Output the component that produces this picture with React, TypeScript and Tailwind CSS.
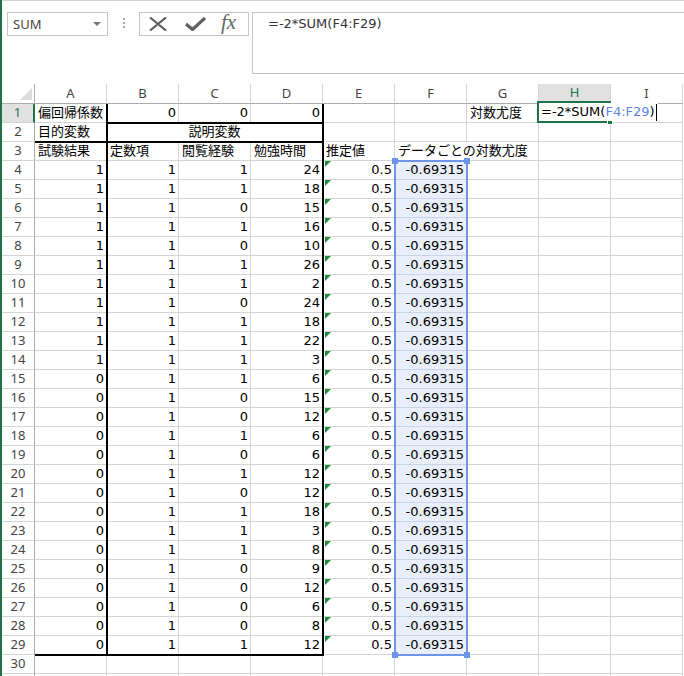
import React from "react";

const COLS = ["A", "B", "C", "D", "E", "F", "G", "H", "I"];
const colA = [1, 1, 1, 1, 1, 1, 1, 1, 1, 1, 1, 0, 0, 0, 0, 0, 0, 0, 0, 0, 0, 0, 0, 0, 0, 0];
const colC = [1, 1, 0, 1, 0, 1, 1, 0, 1, 1, 1, 1, 0, 0, 1, 0, 1, 0, 1, 1, 1, 0, 0, 0, 0, 1];
const colD = [24, 18, 15, 16, 10, 26, 2, 24, 18, 22, 3, 6, 15, 12, 6, 6, 12, 12, 18, 3, 8, 9, 12, 6, 8, 12];

type Cell = { t?: string; align?: "l" | "r" | "c"; span?: number; skip?: boolean };

function buildRow(r: number): Cell[] {
  const cells: Cell[] = COLS.map(() => ({}));
  if (r === 1) {
    cells[0] = { t: "偏回帰係数", align: "l" };
    cells[1] = { t: "0", align: "r" };
    cells[2] = { t: "0", align: "r" };
    cells[3] = { t: "0", align: "r" };
    cells[6] = { t: "対数尤度", align: "l" };
  } else if (r === 2) {
    cells[0] = { t: "目的変数", align: "l" };
    cells[1] = { t: "説明変数", align: "c", span: 3 };
    cells[2] = { skip: true };
    cells[3] = { skip: true };
  } else if (r === 3) {
    cells[0] = { t: "試験結果", align: "l" };
    cells[1] = { t: "定数項", align: "l" };
    cells[2] = { t: "閲覧経験", align: "l" };
    cells[3] = { t: "勉強時間", align: "l" };
    cells[4] = { t: "推定値", align: "l" };
    cells[5] = { t: "データごとの対数尤度", align: "l" };
  } else if (r >= 4 && r <= 29) {
    const i = r - 4;
    cells[0] = { t: String(colA[i]), align: "r" };
    cells[1] = { t: "1", align: "r" };
    cells[2] = { t: String(colC[i]), align: "r" };
    cells[3] = { t: String(colD[i]), align: "r" };
    cells[4] = { t: "0.5", align: "r" };
    cells[5] = { t: "-0.69315", align: "r" };
  }
  return cells;
}

const rows = Array.from({ length: 31 }, (_, i) => i + 1);

export default function App() {
  return (
    <div className="w-[684px] h-[676px] overflow-hidden bg-white border-l-2 border-[#217346] text-[13px] [font-family:'DejaVu_Sans','Noto_Sans_CJK_JP',sans-serif]">
      {/* Formula bar area */}
      <div className="h-[84px] border-t border-[#d4d4d4] flex items-start pt-[11px]">
        <div className="ml-[5px] w-[101px] h-[24px] border border-[#c6c6c6] flex items-center justify-between pl-[5px] pr-[6px]">
          <span className="text-[#444] text-[13px] leading-none [font-family:'Noto_Sans',sans-serif]">SUM</span>
          <span className="w-0 h-0 border-l-[4px] border-r-[4px] border-t-[4px] border-l-transparent border-r-transparent border-t-[#777]" />
        </div>
        <div className="ml-[15px] mt-[6px] flex flex-col gap-[2px]">
          <span className="w-[2px] h-[2px] bg-[#a8a8a8]" />
          <span className="w-[2px] h-[2px] bg-[#a8a8a8]" />
          <span className="w-[2px] h-[2px] bg-[#a8a8a8]" />
        </div>
        <div className="ml-[14px] w-[110px] h-[24px] border border-[#c6c6c6] flex items-center">
          <svg className="ml-[9px]" width="18" height="14" viewBox="0 0 18 14">
            <path d="M1 0.5 L17 13.5 M17 0.5 L1 13.5" stroke="#5f5f5f" strokeWidth="2.2" fill="none" />
          </svg>
          <svg className="ml-[18px]" width="21" height="14" viewBox="0 0 21 14">
            <path d="M1 7 L7.5 12.5 L20 1" stroke="#5f5f5f" strokeWidth="3.2" fill="none" />
          </svg>
          <span className="ml-[15px] text-[#666] text-[21px] italic leading-none [font-family:'Liberation_Serif',serif] -mt-[3px]">fx</span>
        </div>
        <div className="ml-[3px] flex-1 h-[62px] border border-r-0 border-[#c6c6c6] pl-[15px] pt-[1px]">
          <span className="text-[#333] text-[13px] leading-[18px]">=-2*SUM(F4:F29)</span>
        </div>
      </div>

      {/* Sheet */}
      <div className="relative">
        <div className="grid grid-cols-[33px_repeat(9,72px)] grid-rows-[20px_repeat(31,19px)]">
          {/* header row */}
          <div className="relative border-r border-b border-[#ababab] bg-white">
            <span className="absolute right-[2px] bottom-[3px] w-0 h-0 border-b-[12px] border-l-[12px] border-b-[#dcdcdc] border-l-transparent" />
          </div>
          {COLS.map((c) =>
            c === "H" ? (
              <div
                key={c}
                className="bg-[#e1e1e1] border-r border-[#d4d4d4] border-b-2 border-b-[#217346] flex items-center justify-center text-[#217346] text-[13px] [font-family:'Noto_Sans',sans-serif]"
              >
                {c}
              </div>
            ) : (
              <div
                key={c}
                className="border-r border-[#d4d4d4] border-b border-b-[#ababab] flex items-center justify-center text-[#444] text-[13px] [font-family:'Noto_Sans',sans-serif]"
              >
                {c}
              </div>
            )
          )}
          {rows.map((r) => {
            const cells = buildRow(r);
            return (
              <React.Fragment key={r}>
                {r === 1 ? (
                  <div className="bg-[#e1e1e1] border-b border-[#d4d4d4] border-r-2 border-r-[#217346] flex items-center justify-center text-[#217346] text-[13px] [font-family:'Noto_Sans',sans-serif]">
                    {r}
                  </div>
                ) : (
                  <div className="border-b border-[#d4d4d4] border-r border-r-[#ababab] flex items-center justify-center text-[#444] text-[13px] [font-family:'Noto_Sans',sans-serif]">
                    {r}
                  </div>
                )}
                {cells.map((cell, ci) => {
                  if (cell.skip) return null;
                  const isSel = ci === 5 && r >= 4 && r <= 29;
                  const isF3 = ci === 5 && r === 3;
                  const isTri = ci === 4 && r >= 4 && r <= 29;
                  const cls = [
                    "relative border-b leading-[18px] whitespace-nowrap text-black text-[13px]",
                    isF3 ? "overflow-visible z-10" : "border-r overflow-hidden",
                    isSel ? "bg-[#e8eefa] border-[#cbd4e6]" : "border-[#d4d4d4]",
                    cell.align === "r" ? "text-right pr-[2px]" : cell.align === "c" ? "text-center" : "pl-[3px]",
                    cell.span === 3 ? "col-span-3" : "",
                  ].join(" ");
                  return (
                    <div key={ci} className={cls}>
                      {isTri && (
                        <span className="absolute left-[2px] top-0 w-0 h-0 border-t-[6px] border-r-[6px] border-t-[#1e8a3c] border-r-transparent" />
                      )}
                      {cell.t}
                    </div>
                  );
                })}
              </React.Fragment>
            );
          })}
        </div>

        {/* thick borders */}
        <div className="absolute left-[104px] top-[20px] w-[2px] h-[552px] bg-black z-20" />
        <div className="absolute left-[320px] top-[20px] w-[2px] h-[552px] bg-black z-20" />
        <div className="absolute left-[104px] top-[38px] w-[218px] h-[2px] bg-black z-20" />
        <div className="absolute left-[33px] top-[57px] w-[289px] h-[2px] bg-black z-20" />
        <div className="absolute left-[33px] top-[570px] w-[289px] h-[2px] bg-black z-20" />

        {/* selection range F4:F29 */}
        <div className="absolute left-[392px] top-[76px] w-[74px] h-[496px] border-2 border-[#6f93e6] z-20" />
        <div className="absolute left-[390px] top-[74px] w-[6px] h-[6px] bg-[#6f93e6] z-20" />
        <div className="absolute left-[462px] top-[74px] w-[6px] h-[6px] bg-[#6f93e6] z-20" />
        <div className="absolute left-[390px] top-[568px] w-[6px] h-[6px] bg-[#6f93e6] z-20" />
        <div className="absolute left-[462px] top-[568px] w-[6px] h-[6px] bg-[#6f93e6] z-20" />

        {/* active cell H1 */}
        <div className="absolute left-[535px] top-[17px] w-[74px] h-[22px] border-2 border-[#217346] z-30" />
        <div className="absolute left-[605px] top-[36px] w-[6px] h-[5px] bg-[#217346] border border-white z-30" />
        <div className="absolute left-[537px] top-[19px] h-[18px] bg-white z-40 flex items-center pl-[2px] pr-[1px] whitespace-nowrap text-[13px] leading-[18px]">
          <span className="text-black">=-2*SUM(</span>
          <span className="text-[#5b85e0]">F4:F29</span>
          <span className="text-black">)</span>
          <span className="ml-[1px] w-[1px] h-[17px] bg-black" />
        </div>
      </div>
    </div>
  );
}
